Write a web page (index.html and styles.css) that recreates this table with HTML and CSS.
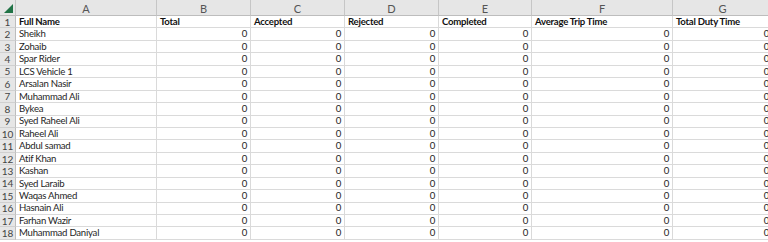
FILE: index.html
```html
<!DOCTYPE html>
<html>
<head>
<meta charset="utf-8">
<link rel="stylesheet" href="styles.css">
</head>
<body>
<div class="sheet" id="sheet">
  <div class="corner"><span class="tri"></span></div>
  <div class="colhead">A</div>
  <div class="colhead">B</div>
  <div class="colhead">C</div>
  <div class="colhead">D</div>
  <div class="colhead">E</div>
  <div class="colhead">F</div>
  <div class="colhead">G</div>

  <div class="rowhead">1</div>
  <div class="cell bold">Full Name</div>
  <div class="cell bold">Total</div>
  <div class="cell bold">Accepted</div>
  <div class="cell bold">Rejected</div>
  <div class="cell bold">Completed</div>
  <div class="cell bold">Average Trip Time</div>
  <div class="cell bold">Total Duty Time</div>
</div>
<script src="script.js"></script>
</body>
</html>
```
FILE: script.js
```js
const names = ["Sheikh","Zohaib","Spar Rider","LCS Vehicle 1","Arsalan Nasir","Muhammad Ali","Bykea","Syed Raheel Ali","Raheel Ali","Abdul samad","Atif Khan","Kashan","Syed Laraib","Waqas Ahmed","Hasnain Ali","Farhan Wazir","Muhammad Daniyal"];
const sheet = document.getElementById('sheet');
names.forEach((n, i) => {
  let html = '<div class="rowhead">' + (i + 2) + '</div><div class="cell">' + n + '</div>';
  for (let k = 0; k < 6; k++) html += '<div class="cell num">0</div>';
  sheet.insertAdjacentHTML('beforeend', html);
});
```
FILE: styles.css
```css
* { box-sizing: border-box; }
html, body { margin: 0; padding: 0; background: #fff; }
body { width: 768px; height: 242px; overflow: hidden; font-family: Lato, "Liberation Sans", Arial, sans-serif; }
.sheet {
  display: grid;
  grid-template-columns: 16px 141px 94px 94px 94px 93px 141px 100px;
  grid-template-rows: 16px repeat(18, 12.444px);
  width: 773px;
}
.corner {
  background: #e6e6e6;
  border-right: 1px solid #c6c6c6;
  border-bottom: 1px solid #bdbdbd;
  position: relative;
}
.tri {
  position: absolute;
  right: 2px;
  bottom: 2px;
  width: 0; height: 0;
  border-left: 9px solid transparent;
  border-bottom: 9px solid #217346;
}
.colhead {
  background: #e6e6e6;
  border-right: 1px solid #c6c6c6;
  border-bottom: 1px solid #bdbdbd;
  color: #555;
  font-size: 11px;
  display: flex;
  align-items: center;
  justify-content: center;
  padding-top: 1px;
}
.rowhead {
  background: #e6e6e6;
  border-right: 1px solid #bdbdbd;
  border-bottom: 1px solid #d0d0d0;
  color: #444;
  font-size: 10px;
  display: flex;
  align-items: center;
  justify-content: center;
  line-height: 1;
}
.cell {
  border-right: 1px solid #dadada;
  border-bottom: 1px solid #dadada;
  color: #1e1e1e;
  font-size: 9.6px;
  letter-spacing: -0.25px;
  line-height: 1;
  display: flex;
  align-items: center;
  padding: 0 3px 0 3px;
  white-space: nowrap;
  overflow: hidden;
}
.bold { font-weight: bold; color: #111; }
.num { justify-content: flex-end; }
```
